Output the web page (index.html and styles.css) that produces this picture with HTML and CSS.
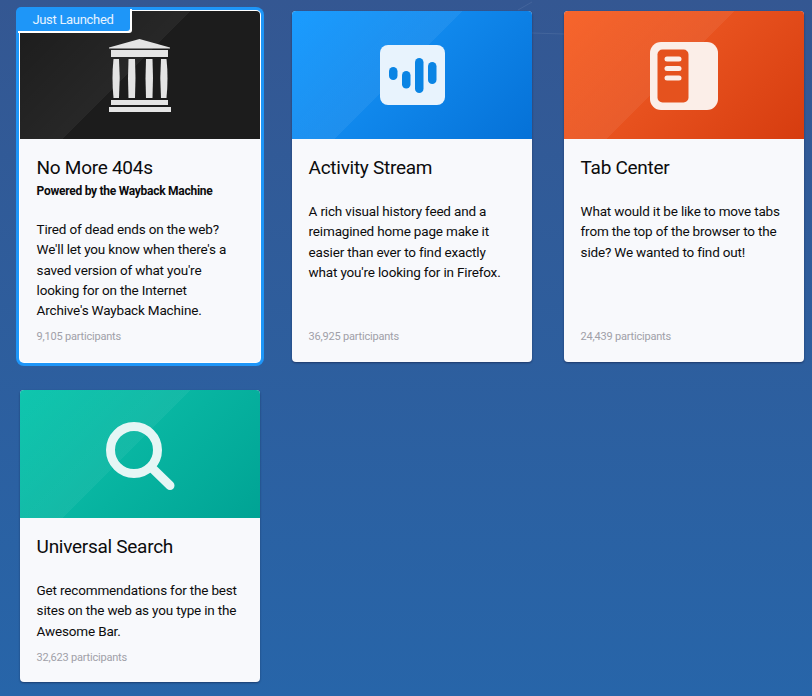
FILE: index.html
```html
<!DOCTYPE html>
<html lang="en">
<head>
<meta charset="utf-8">
<title>Test Pilot experiments</title>
<link rel="stylesheet" href="styles.css">
</head>
<body>
<svg class="bg-lines" width="812" height="696" viewBox="0 0 812 696" aria-hidden="true">
  <path d="M518 10 L532 2" class="bg-line"/>
  <path d="M532 33 L564 34" class="bg-line"/>
</svg>
<main class="grid">
  <article class="card card-selected">
    <span class="tag">Just Launched</span>
    <div class="hero hero-black">
      <svg class="icon icon-temple" width="64" height="76" viewBox="0 0 64 76">
        <g fill="#e4e4e4">
          <path d="M1 9.5 L31.5 1 L62 9.5 L62 10.5 L1 10.5 Z"/>
          <rect x="3" y="12" width="57" height="7"/>
          <path d="M5.5 21 H11 Q12.5 40 11 60 H5.5 Q3.5 40 5.5 21 Z"/>
          <path d="M20.500 21 H27 Q28 40 27 60 H20.500 Q19.500 40 20.500 21 Z"/>
          <path d="M38 21 H44.500 Q45.500 40 44.500 60 H38 Q37 40 38 21 Z"/>
          <path d="M53 21 H58.500 Q60.500 40 58.500 60 H53 Q51.500 40 53 21 Z"/>
          <rect x="3" y="62" width="57" height="5"/>
          <rect x="1" y="69" width="62" height="5"/>
        </g>
      </svg>
    </div>
    <div class="body">
      <h2 class="title">No More 404s</h2>
      <p class="subtitle">Powered by the Wayback Machine</p>
      <p class="desc">Tired of dead ends on the web? We'll let you know when there's a saved version of what you're looking for on the Internet Archive's Wayback Machine.</p>
      <p class="count">9,105 participants</p>
    </div>
  </article>

  <article class="card">
    <div class="hero hero-blue">
      <svg class="icon" width="65" height="60" viewBox="0 0 65 60">
        <rect width="65" height="60" rx="8" fill="#e8f3fd"/>
        <g fill="#0a84e4">
          <rect x="9" y="22" width="8.500" height="13" rx="4.250"/>
          <rect x="22" y="26" width="8.500" height="17.500" rx="4.250"/>
          <rect x="35" y="13" width="8.500" height="35" rx="4.250"/>
          <rect x="48" y="17" width="8.500" height="22" rx="4.250"/>
        </g>
      </svg>
    </div>
    <div class="body">
      <h2 class="title">Activity Stream</h2>
      <p class="desc">A rich visual history feed and a reimagined home page make it easier than ever to find exactly what you're looking for in Firefox.</p>
      <p class="count">36,925 participants</p>
    </div>
  </article>

  <article class="card">
    <div class="hero hero-orange">
      <svg class="icon icon-tab" width="68" height="68" viewBox="0 0 68 68">
        <rect width="68" height="68" rx="11" fill="#fbeee8"/>
        <rect x="7.500" y="7.500" width="31" height="53" rx="5" fill="#e5521e"/>
        <g fill="#fbeee8">
          <rect x="14.500" y="14.500" width="17" height="5" rx="2.500"/>
          <rect x="14.500" y="24" width="17" height="5" rx="2.500"/>
          <rect x="14.500" y="33.500" width="17" height="5" rx="2.500"/>
        </g>
      </svg>
    </div>
    <div class="body">
      <h2 class="title">Tab Center</h2>
      <p class="desc">What would it be like to move tabs from the top of the browser to the side? We wanted to find out!</p>
      <p class="count">24,439 participants</p>
    </div>
  </article>

  <article class="card">
    <div class="hero hero-teal">
      <svg class="icon icon-search" width="70" height="70" viewBox="0 0 70 70" fill="none" stroke="#e5f6f5" stroke-width="9">
        <circle cx="28" cy="28" r="23.500"/>
        <path d="M46 46 L64 63.500" stroke-linecap="round"/>
      </svg>
    </div>
    <div class="body">
      <h2 class="title">Universal Search</h2>
      <p class="desc">Get recommendations for the best sites on the web as you type in the Awesome Bar.</p>
      <p class="count">32,623 participants</p>
    </div>
  </article>
</main>
</body>
</html>
```

FILE: styles.css
```css
html, body {
  margin: 0;
  height: 696px;
  overflow: hidden;
}

body {
  position: relative;
  background: linear-gradient(180deg, #345792 0%, #2765a9 100%);
  font-family: Roboto, "Noto Sans", sans-serif;
  color: #0c0c0d;
}

.bg-lines {
  position: absolute;
  left: 0;
  top: 0;
}

.bg-line {
  stroke: rgba(255, 255, 255, 0.08);
  stroke-width: 1;
  fill: none;
}

.grid {
  position: relative;
  display: grid;
  grid-template-columns: repeat(3, 240px);
  grid-template-rows: 351px auto;
  column-gap: 32px;
  row-gap: 28px;
  padding: 11px 0 0 20px;
  align-items: stretch;
}

.card {
  position: relative;
  display: flex;
  flex-direction: column;
  background: #f8f9fc;
  border-radius: 4px;
  box-shadow: 0 1px 2px rgba(12, 12, 40, 0.45);
}

.card-selected {
  box-shadow: 0 0 0 1px #fff, 0 0 0 4px #1e96f8;
}

.tag {
  position: absolute;
  left: -4px;
  top: -4px;
  width: 114px;
  height: 24px;
  box-sizing: border-box;
  background: #1e96f8;
  border-radius: 5px 0 3px 0;
  box-shadow: 2px 2px 0 #fff;
  color: #e6f3ff;
  font-size: 13px;
  letter-spacing: -0.3px;
  line-height: 26px;
  text-align: center;
}

.hero {
  display: flex;
  align-items: center;
  justify-content: center;
  height: 128px;
  flex: none;
  border-radius: 4px 4px 0 0;
}

.icon {
  display: block;
}

.icon-temple {
  margin-top: 2px;
}

.icon-tab {
  margin: 1px 0 0 0;
}

.icon-search {
  margin: 5px 0 0 2px;
}

.hero-black {
  background:
    linear-gradient(135deg, transparent 0%, rgba(255, 255, 255, 0.05) 46.2%, transparent 46.2%),
    #1c1c1c;
}

.hero-blue {
  background:
    linear-gradient(135deg, transparent 0%, rgba(255, 255, 255, 0.06) 46.2%, transparent 46.2%),
    linear-gradient(135deg, #1a9cff 0%, #0571d7 100%);
}

.hero-orange {
  background:
    linear-gradient(135deg, transparent 0%, rgba(255, 255, 255, 0.06) 46.2%, transparent 46.2%),
    linear-gradient(135deg, #f7652c 0%, #d63c0f 100%);
}

.hero-teal {
  background:
    linear-gradient(135deg, transparent 0%, rgba(255, 255, 255, 0.05) 46.2%, transparent 46.2%),
    linear-gradient(135deg, #0fc6ae 0%, #00a394 100%);
}

.body {
  flex: 1;
  display: flex;
  flex-direction: column;
  padding: 16px 16.6px 17px;
}

.card:nth-child(-n+3) .body {
  padding-bottom: 18px;
}

.title {
  margin: 0;
  font-size: 19px;
  letter-spacing: -0.28px;
  font-weight: 400;
  line-height: 26px;
  color: #0c0c0d;
}

.subtitle {
  margin: 2px 0 0;
  font-size: 12px;
  letter-spacing: -0.27px;
  font-weight: 700;
  line-height: 16px;
}

.desc {
  margin: 20px 0 0;
  padding-right: 3px;
  font-size: 13.500px;
  letter-spacing: -0.17px;
  line-height: 20.3px;
}

.count {
  margin: auto 0 0;
  padding-top: 10px;
  font-size: 11px;
  letter-spacing: -0.2px;
  line-height: 14px;
  color: #a0a0a8;
}
```
